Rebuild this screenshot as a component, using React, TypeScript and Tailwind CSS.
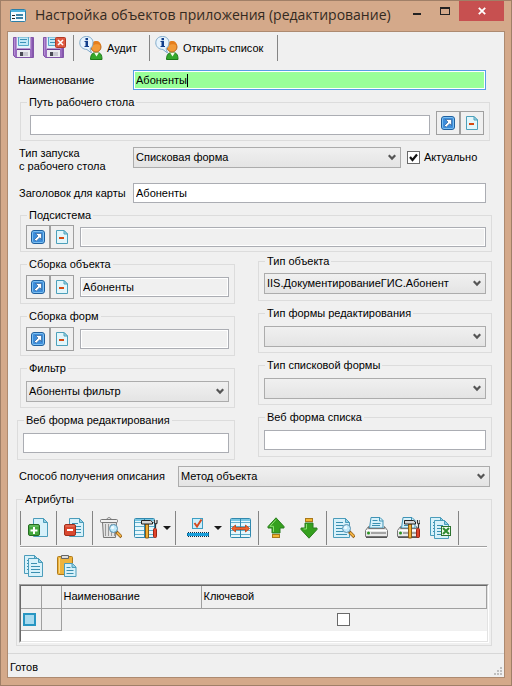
import React, { useId } from "react";

type IconProps = { className?: string };

const Svg = ({ w, h, children }: { w: number; h: number; children: React.ReactNode }) => (
  <svg width={w} height={h} viewBox={`0 0 ${w} ${h}`} fill="none" aria-hidden="true" className="block shrink-0">
    {children}
  </svg>
);

/* ---------- icons ---------- */

const WindowIcon = () => (
  <Svg w={16} h={13}>
    <rect x=".5" y=".5" width="15" height="12" rx="1" fill="#f4fbff" stroke="#2b7fa8" />
    <rect x="1" y="1" width="14" height="2" fill="#4db3de" />
    <rect x="2" y="6" width="3" height="1" fill="#222" />
    <rect x="2" y="9" width="3" height="1" fill="#222" />
    <rect x="6" y="5" width="7" height="2" fill="#3d84a8" />
    <rect x="6" y="8" width="7" height="2" fill="#3d84a8" />
  </Svg>
);

const Floppy = () => (
  <>
    <path d="M.5 .5h20v20h-18l-2-2z" fill="#9a6cc0" stroke="#8256a8" />
    <path d="M1.500 1v17" stroke="#b48cd4" />
    <path d="M19.500 1v19" stroke="#8658ad" />
    <rect x="3.500" y="0" width="14" height="11.500" fill="#e3f5fb" stroke="#b99ad2" />
    <path d="M5.500 0h10v8.500h-10z" fill="#c3e9f6" stroke="#58a9c9" />
    <path d="M7 2.500h7M7 5.500h6" stroke="#3c93b8" />
    <rect x="4" y="13" width="13" height="7" fill="#ececf0" />
    <path d="M4 12.500h13" stroke="#6b3f92" />
    <rect x="7" y="15" width="3" height="4" fill="#4a4a55" />
    <rect x="10" y="15" width="5" height="4" fill="#c9c9d1" />
  </>
);

const SaveIcon = () => (
  <Svg w={22} h={22}>
    <Floppy />
  </Svg>
);

const SaveCloseIcon = () => (
  <Svg w={24} h={22}>
    <Floppy />
    <rect x="12.500" y=".5" width="10" height="10" rx="1" fill="#df5a42" stroke="#b33a24" />
    <path d="M15 3l5 5M20 3l-5 5" stroke="#fff" strokeWidth="1.600" />
  </Svg>
);

const InfoUserIcon = () => (
  <Svg w={24} h={25}>
    <path d="M11.500 23.500c0-5 2-7 6-7s5.500 2 5.500 7z" fill="#35a82c" stroke="#1d7a1a" />
    <path d="M15 16.500l2.500 4 2.500-4z" fill="#f4fbe8" />
    <circle cx="17" cy="11" r="5" fill="#f29a38" stroke="#b8651a" />
    <path d="M12.500 10c.5-4 2.500-5 4.800-5 3 0 4.700 2 4.700 5-2-2.500-6-2.500-9.500 0z" fill="#e57e1c" />
    <path
      d="M7.500 .5c4 0 6.500 2.700 6.500 6.200 0 3-1.600 5.200-3 5.900l1.500 4.400-4.600-3.500C3.500 13.300.8 10.500.8 6.800.8 3 3.500.5 7.500.5z"
      fill="#e6f3fd"
      stroke="#7fa9c9"
    />
    <rect x="6.500" y="2" width="2.500" height="2.200" fill="#123f8c" />
    <rect x="5.500" y="5" width="3.500" height="1" fill="#123f8c" />
    <rect x="6.500" y="5" width="2.500" height="5.500" fill="#123f8c" />
    <rect x="5.500" y="10" width="4.500" height="1" fill="#123f8c" />
  </Svg>
);

const OpenIcon = () => (
  <Svg w={14} h={14}>
    <rect x=".5" y=".5" width="13" height="13" rx="2.500" fill="#7cc0f2" stroke="#1f5f9e" />
    <rect x="2" y="2" width="10" height="10" rx="1" fill="#3d8ddb" />
    <path
      d="M4.500 3.500h6v6l-1.800-1.800-3.500 3.500-1.700-1.700 3.500-3.500z"
      fill="#fff"
      stroke="#1c4f86"
      strokeWidth=".6"
    />
  </Svg>
);

const ClearIcon = () => (
  <Svg w={12} h={14}>
    <path d="M.5 .5h7.500l3.500 3.500v9.500H.5z" fill="#e2f6fb" stroke="#4da0ba" />
    <path d="M8 .5v3.500h3.500z" fill="#a8dcea" stroke="#4da0ba" />
    <rect x="3" y="7" width="5" height="2" fill="#d9480f" />
  </Svg>
);

const Page = ({ lines = true }: { lines?: boolean }) => (
  <>
    <path d="M.5 .5h10l4 4v14H.5z" fill="#d7f1fa" stroke="#4b9cba" />
    <path d="M10.500 .5v4h4z" fill="#8fd0e6" stroke="#4b9cba" />
    {lines && <path d="M3 5.500h6M3 8.500h9M3 11.500h9M3 14.500h9" stroke="#3b8fb0" />}
  </>
);

const AddIcon = () => (
  <Svg w={20} h={20}>
    <g transform="translate(5 0)"><Page lines={false} /></g>
    <rect x=".5" y="6.500" width="11" height="11" rx="1.500" fill="#45a83d" stroke="#246b21" />
    <path d="M1.500 8h9" stroke="#7fcb78" />
    <path d="M6 9v7M2.500 12.500h7" stroke="#fff" strokeWidth="2" />
  </Svg>
);

const RemoveIcon = () => (
  <Svg w={20} h={20}>
    <g transform="translate(5 0)"><Page /></g>
    <rect x=".5" y="6.500" width="11" height="11" rx="1.500" fill="#d9482f" stroke="#a02d1a" />
    <path d="M1.500 8h9" stroke="#ee8672" />
    <path d="M3 12h6" stroke="#fff" strokeWidth="2" />
  </Svg>
);

const Magnifier = () => (
  <>
    <path d="M7 7.500l5.500 5.500" stroke="#8a5a1c" strokeWidth="3.200" />
    <path d="M8 8.500l4 4" stroke="#f4b443" strokeWidth="1.800" />
    <circle cx="4.500" cy="4.500" r="4" fill="#bfe9fa" stroke="#5a90ae" />
    <circle cx="3.600" cy="3.600" r="1.600" fill="#f0fbff" />
  </>
);

const TrashIcon = () => (
  <Svg w={22} h={22}>
    <path d="M2.500 5.500h14l-1 15h-12z" fill="#e2e2e2" stroke="#777" />
    <path d="M5.500 7v12M8.500 7v12M11.500 7v12M14.500 7v12" stroke="#999" />
    <rect x=".5" y="2.500" width="17" height="3" rx="1" fill="#f0f0f0" stroke="#777" />
    <path d="M7 2.500c0-2.500 4-2.500 4 0" stroke="#777" />
    <g transform="translate(9 7)"><Magnifier /></g>
  </Svg>
);

const Sheet = () => (
  <>
    <rect x=".5" y=".5" width="20" height="19" rx="1" fill="#e6f7fc" stroke="#3189ae" />
    <path d="M1 2h19" stroke="#79c7e2" strokeWidth="2" />
    <path d="M1 4.500h19M1 8.500h19M1 12.500h19M1 16.500h19" stroke="#61b0cd" />
    <path d="M10.500 1v18" stroke="#3189ae" />
  </>
);

const Tools = () => (
  <>
    <path d="M4.500 5h3v14h-3z" fill="#f0b033" stroke="#8c5a10" />
    <path d="M.5 1.500h9l2 1.500v2H.5z" fill="#d6d6d6" stroke="#222" />
    <path d="M13.500 1v3l1 1v4M16 1v3l-1 1" stroke="#333" strokeWidth="1.200" />
    <rect x="12.500" y="9.500" width="3" height="9" rx="1" fill="#e0452c" stroke="#9c2414" />
  </>
);

const SheetToolsIcon = () => (
  <Svg w={24} h={21}>
    <Sheet />
    <g transform="translate(7 1)"><Tools /></g>
  </Svg>
);

const CheckLineIcon = () => (
  <Svg w={22} h={20}>
    <rect x="5.500" y=".5" width="10" height="10" fill="#cdeefa" stroke="#3d9fc4" />
    <path d="M7.500 5l2.500 3.500L14.500 1.500" stroke="#d44a20" strokeWidth="2" />
    <rect x="0" y="14" width="22" height="5" fill="#0b6f9e" />
    <path d="M0 14.500h22M0 18.500h22" stroke="#f0f0f0" strokeDasharray="1 1" />
    <path d="M0 14.500h22M0 18.500h22" stroke="#0a2d45" strokeDasharray="1 1" strokeDashoffset="1" />
    <rect x="1" y="15" width="20" height="3" fill="#1a9fdc" />
  </Svg>
);

const SheetWidthIcon = () => (
  <Svg w={21} h={20}>
    <Sheet />
    <path
      d="M1.500 10.500l4-3.500v2.500h10V7l4 3.500-4 3.500v-2.500h-10V14z"
      fill="#f0622c"
      stroke="#b83d12"
      strokeWidth=".8"
    />
  </Svg>
);

const UpIcon = () => (
  <Svg w={18} h={22}>
    <path d="M9 .8l8 8.700v1.500h-4v5H5v-5H1V9.500z" fill="#35a01e" stroke="#2c7d20" />
    <path d="M9 2.500l-6 6.800h3.500v5.500" stroke="#8be070" />
    <rect x="5.500" y="17.500" width="7" height="3" fill="#f2b632" stroke="#a8781a" />
  </Svg>
);

const DownIcon = () => (
  <Svg w={18} h={22}>
    <rect x="5.500" y="1.500" width="7" height="3" fill="#f2b632" stroke="#a8781a" />
    <path d="M9 21.200l8-8.700V11h-4V6H5v5H1v1.500z" fill="#35a01e" stroke="#2c7d20" />
    <path d="M6.500 7v5H3.500" stroke="#8be070" />
  </Svg>
);

const PreviewIcon = () => (
  <Svg w={22} h={22}>
    <g transform="translate(0 1)">
      <path d="M.5 .5h12l4 4v15H.5z" fill="#d7f1fa" stroke="#4b9cba" />
      <path d="M12.500 .5v4h4z" fill="#8fd0e6" stroke="#4b9cba" />
      <path d="M3 4.500h7M3 7.500h7M3 10.500h6M3 13.500h7M3 16.500h11" stroke="#3b8fb0" />
    </g>
    <g transform="translate(9 7)"><Magnifier /></g>
  </Svg>
);

const Printer = () => (
  <>
    <path d="M4.500 11l1.500-10.500h9l3 3V11z" fill="#d7f1fa" stroke="#3f93b5" />
    <path d="M14.500 .5v3.500h3.500" stroke="#3f93b5" />
    <path d="M7.500 3.500h5M7.500 6.500h8M7 8.500h8" stroke="#3b8fb0" />
    <path d="M3.500 9.500l-3 4v6h22v-6l-3-4v2h-16z" fill="#e9e9e9" stroke="#777" />
    <path d="M1 13.500h21" stroke="#fff" />
    <path d="M1 20.500h21" stroke="#555" />
    <rect x="6" y="15" width="15" height="2" fill="#a5a5a5" />
    <circle cx="3.500" cy="16" r="1.500" fill="#2a9322" />
  </>
);

const PrintIcon = () => (
  <Svg w={23} h={22}>
    <Printer />
  </Svg>
);

const PrintSetupIcon = () => (
  <Svg w={23} h={22}>
    <Printer />
    <g transform="translate(7 2)"><Tools /></g>
  </Svg>
);

const ExcelIcon = () => (
  <Svg w={22} h={22}>
    <Page />
    <g transform="translate(4 3)"><Page /></g>
    <rect x="11.500" y="9.500" width="9" height="9" fill="#f2faf0" stroke="#2d7330" />
    <path d="M13 11l6 6M19 11l-6 6" stroke="#2d8a30" strokeWidth="2" />
  </Svg>
);

const CopyIcon = () => (
  <Svg w={20} h={22}>
    <Page />
    <g transform="translate(4 3)"><Page /></g>
  </Svg>
);

const PasteIcon = () => (
  <Svg w={20} h={22}>
    <rect x=".5" y="1.500" width="15" height="18" rx="1" fill="#eeb33c" stroke="#ad7a1c" />
    <path d="M2.500 3v15" stroke="#f9d98c" />
    <path d="M4.500 3.500V.5h7v3z" fill="#dedede" stroke="#666" />
    <path d="M7.500 8.500h8l3.500 3.500v9.500H7.500z" fill="#d7f1fa" stroke="#4b9cba" />
    <path d="M15 8.500v4h4" fill="#8fd0e6" stroke="#4b9cba" />
    <path d="M9.500 12.500h4M9.500 15.500h7M9.500 18.500h7" stroke="#3b8fb0" />
  </Svg>
);

const CaretIcon = () => (
  <Svg w={8} h={4}>
    <path d="M0 0h8L4 4z" fill="#1a1a1a" />
  </Svg>
);

const Chevron = ({ className = "" }: IconProps) => (
  <svg width="8" height="7" viewBox="0 0 8 7" fill="none" aria-hidden="true" className={className}>
    <path d="M.7 1.200L4 4.600l3.300-3.400" stroke="#555" strokeWidth="2.200" />
  </svg>
);

/* ---------- controls ---------- */

type GroupProps = { title: string; className?: string; bodyClass?: string; children: React.ReactNode };

const Group = ({ title, className = "", bodyClass = "", children }: GroupProps) => (
  <fieldset className={`min-w-0 border border-[#dcdcdc] ${className}`}>
    <legend className="ml-1.5 px-0.5 leading-[13px]">{title}</legend>
    <div className={bodyClass}>{children}</div>
  </fieldset>
);

type FieldProps = { label?: string; id?: string; value?: string };

const TextBox = ({ label, id, value = "", readOnly = false }: FieldProps & { readOnly?: boolean }) => (
  <input
    id={id}
    type="text"
    aria-label={label}
    defaultValue={value}
    readOnly={readOnly}
    className={`h-5 w-full min-w-0 flex-1 border border-[#abadb3] px-0.5 outline-none ${
      readOnly ? "bg-[#f0f0f0] shadow-[inset_0_0_0_1px_#ffffff]" : "bg-white"
    }`}
  />
);

const Combo = ({ label, id, value = "" }: FieldProps) => (
  <div className="relative min-w-0 flex-1">
    <select
      id={id}
      aria-label={label}
      defaultValue={value}
      className="block h-[21px] w-full appearance-none border border-[#acacac] bg-linear-to-b from-[#f0f0f0] to-[#e4e4e4] pr-5 pl-0.5 outline-none"
    >
      <option value={value}>{value}</option>
    </select>
    <Chevron className="pointer-events-none absolute top-[7px] right-[5px]" />
  </div>
);

const LookupButtons = () => (
  <div className="flex shrink-0">
    <button type="button" aria-label="Открыть" className="flex size-6 items-center justify-center border border-[#a0a0a0]">
      <OpenIcon />
    </button>
    <button type="button" aria-label="Очистить" className="flex size-6 items-center justify-center border border-[#a0a0a0]">
      <ClearIcon />
    </button>
  </div>
);

const LookupGroup = ({ title, value, className, bodyClass = "" }: Omit<GroupProps, "children"> & { value?: string }) => (
  <Group title={title} className={className} bodyClass={`flex items-center gap-1.5 ${bodyClass}`}>
    <LookupButtons />
    <TextBox label={title} value={value} readOnly />
  </Group>
);

const ToolButton = ({ label, className, children }: { label: string; className: string; children: React.ReactNode }) => (
  <button type="button" aria-label={label} className={`flex h-[34px] shrink-0 items-center justify-center ${className}`}>
    {children}
  </button>
);

const ToolSection = ({ className = "", children }: { className?: string; children?: React.ReactNode }) => (
  <div className={`flex h-[34px] border-l border-[#858585] ${className}`}>{children}</div>
);

/* ---------- window ---------- */

const TitleBar = () => (
  <header className="flex h-[30px] items-start justify-between pl-[9px]">
    <div className="flex items-center gap-[9px] pt-0.5">
      <WindowIcon />
      <h1 className="font-['Open_Sans','Noto_Sans',sans-serif] text-[14px] leading-6 whitespace-nowrap text-[#33291f]">
        Настройка объектов приложения (редактирование)
      </h1>
    </div>
    <div className="flex pr-[7px]">
      <button type="button" aria-label="Свернуть" className="flex h-5 w-7 items-center justify-center pt-1.5">
        <span className="h-0.5 w-2 bg-[#222]" />
      </button>
      <button type="button" aria-label="Развернуть" className="flex h-5 w-7 items-center justify-center">
        <span className="h-2 w-2.5 border border-t-2 border-[#222]" />
      </button>
      <button type="button" aria-label="Закрыть" className="flex h-5 w-[45px] items-center justify-center bg-[#c75050]">
        <Svg w={8} h={8}>
          <path d="M.8 .8l6.400 6.400M7.200 .8L.8 7.200" stroke="#fff" strokeWidth="1.800" />
        </Svg>
      </button>
    </div>
  </header>
);

const MainToolbar = () => (
  <div role="toolbar" className="flex h-8 items-center pl-[5px]">
    <button type="button" aria-label="Сохранить" className="w-[30px]"><SaveIcon /></button>
    <button type="button" aria-label="Сохранить и закрыть" className="w-[30px]"><SaveCloseIcon /></button>
    <button type="button" className="flex h-[26px] w-[76px] items-center gap-1 border-l border-[#858585] pl-[5px]">
      <InfoUserIcon />
      Аудит
    </button>
    <button
      type="button"
      className="flex h-[26px] w-[129px] items-center gap-1 border-x border-[#858585] pl-[5px] whitespace-nowrap"
    >
      <InfoUserIcon />
      Открыть список
    </button>
  </div>
);

const AttributesToolbar = () => (
  <>
    <div role="toolbar" className="mr-1 ml-[3px] flex border-b border-[#a0a0a0] pb-px shadow-[0_1px_0_#ffffff]">
      <ToolSection className="pr-0.5"><ToolButton label="Добавить" className="w-[33px]"><AddIcon /></ToolButton></ToolSection>
      <ToolSection className="pr-0.5"><ToolButton label="Удалить" className="w-[33px]"><RemoveIcon /></ToolButton></ToolSection>
      <ToolSection className="pr-1">
        <ToolButton label="Найти" className="w-9"><TrashIcon /></ToolButton>
        <ToolButton label="Настройка таблицы" className="w-[34px]"><SheetToolsIcon /></ToolButton>
        <ToolButton label="Ещё" className="w-2"><CaretIcon /></ToolButton>
      </ToolSection>
      <ToolSection className="pl-1.5">
        <ToolButton label="Отметить" className="w-8"><CheckLineIcon /></ToolButton>
        <ToolButton label="Ещё" className="w-2"><CaretIcon /></ToolButton>
        <ToolButton label="Ширина столбцов" className="w-9"><SheetWidthIcon /></ToolButton>
      </ToolSection>
      <ToolSection className="px-px">
        <ToolButton label="Вверх" className="w-8"><UpIcon /></ToolButton>
        <ToolButton label="Вниз" className="w-[33px]"><DownIcon /></ToolButton>
      </ToolSection>
      <ToolSection className="px-px">
        <ToolButton label="Просмотр" className="w-8"><PreviewIcon /></ToolButton>
        <ToolButton label="Печать" className="w-8"><PrintIcon /></ToolButton>
        <ToolButton label="Настройка печати" className="w-8"><PrintSetupIcon /></ToolButton>
        <ToolButton label="Экспорт в Excel" className="w-[33px]"><ExcelIcon /></ToolButton>
      </ToolSection>
      <ToolSection />
    </div>
    <div role="toolbar" className="flex h-[37px] items-center gap-[13px] pl-[7px]">
      <button type="button" aria-label="Копировать"><CopyIcon /></button>
      <button type="button" aria-label="Вставить"><PasteIcon /></button>
    </div>
  </>
);

const AttributesTable = () => (
  <div className="mr-0.5 ml-0.5 border border-[#a0a0a0] border-r-white border-b-white">
    <div className="border border-[#696969] border-r-[#e3e3e3] border-b-[#e3e3e3] bg-white pb-2.5">
      <table className="w-full table-fixed border-collapse bg-[#f0f0f0] text-left">
        <colgroup>
          <col className="w-5" />
          <col className="w-5" />
          <col className="w-[140px]" />
          <col />
        </colgroup>
        <thead>
          <tr className="h-[22px] border-b border-[#a0a0a0]">
            <td className="border-r border-[#a0a0a0]" />
            <td className="border-r border-[#a0a0a0]" />
            <th className="border-r border-[#a0a0a0] px-0.5 font-normal">Наименование</th>
            <th className="border-r border-[#a0a0a0] px-0.5 font-normal">Ключевой</th>
          </tr>
        </thead>
        <tbody>
          <tr className="h-[22px]">
            <td className="border-r border-b border-[#a0a0a0]">
              <Svg w={17} h={13}>
                <rect x="3" y="1" width="11" height="11" fill="#a8daee" stroke="#2896c2" strokeWidth="2" />
              </Svg>
            </td>
            <td className="border-r border-b border-[#a0a0a0]" />
            <td className="bg-[#f2f2f2]" />
            <td className="bg-[#f2f2f2]">
              <input
                type="checkbox"
                aria-label="Ключевой"
                className="mx-auto block size-[13px] appearance-none border border-[#6a6a6a] bg-white"
              />
            </td>
          </tr>
        </tbody>
      </table>
    </div>
  </div>
);

export default function App() {
  const uid = useId();
  return (
    <div className="flex min-h-screen flex-col border border-[#a07f67] bg-[#d4a98a] font-['Liberation_Sans',Arial,sans-serif] text-[11px] leading-[13px] text-black">
      <TitleBar />
      <main className="mx-1.5 mb-[7px] flex flex-1 flex-col border border-[#ad8a70] bg-[#f0f0f0]">
        <MainToolbar />
        <form className="flex flex-col pt-1.5 pr-3 pl-2">
          <div className="flex items-center pr-1.5 pl-0.5">
            <label htmlFor={`${uid}name`} className="w-[115px] shrink-0">Наименование</label>
            <div className="flex h-5 flex-1 items-center border border-[#569de5] bg-white p-px">
              <div className="flex h-full flex-1 items-center bg-[#99ff99] pl-px">
                <input
                  id={`${uid}name`}
                  type="text"
                  defaultValue="Абоненты"
                  className="field-sizing-content bg-transparent outline-none"
                />
                <span className="h-[13px] w-px bg-black" />
              </div>
            </div>
          </div>

          <Group
            title="Путь рабочего стола"
            className="mt-1.5 mr-0.5 ml-1"
            bodyClass="flex items-end gap-1.5 pt-0.5 pr-[5px] pb-[5px] pl-[9px]"
          >
            <TextBox label="Путь рабочего стола" />
            <LookupButtons />
          </Group>

          <div className="mt-1.5 flex items-start pl-[3px]">
            <label htmlFor={`${uid}launch`} className="w-[114px] shrink-0">
              Тип запуска
              <br />с рабочего стола
            </label>
            <Combo id={`${uid}launch`} value="Списковая форма" />
            <label className="ml-1.5 flex h-5 w-[85px] items-center gap-1">
              <span className="relative flex">
                <input
                  type="checkbox"
                  defaultChecked
                  className="peer size-[13px] appearance-none border border-[#6a6a6a] bg-white"
                />
                <svg
                  viewBox="0 0 13 13"
                  fill="none"
                  aria-hidden="true"
                  className="pointer-events-none absolute inset-0 hidden size-[13px] peer-checked:block"
                >
                  <path d="M3 6l2.500 3L10 3.500" stroke="#111" strokeWidth="2.200" />
                </svg>
              </span>
              Актуально
            </label>
          </div>

          <div className="mt-2.5 flex items-center pr-1.5 pl-[3px]">
            <label htmlFor={`${uid}caption`} className="w-[114px] shrink-0 whitespace-nowrap">Заголовок для карты</label>
            <TextBox id={`${uid}caption`} value="Абоненты" />
          </div>

          <LookupGroup title="Подсистема" className="mt-1.5 ml-1" bodyClass="pt-[3px] pr-[5px] pb-0.5 pl-[5px]" />

          <div className="mt-[3px] grid grid-cols-[219fr_234fr] items-start gap-x-[23px]">
            <div className="flex flex-col gap-1.5 pt-[3px]">
              <LookupGroup title="Сборка объекта" value="Абоненты" className="ml-1" bodyClass="px-[5px] py-1" />
              <LookupGroup title="Сборка форм" className="ml-1" bodyClass="px-[5px] py-1" />
              <Group title="Фильтр" className="ml-1" bodyClass="px-[5px] pt-1.5 pb-[5px]">
                <Combo label="Фильтр" value="Абоненты фильтр" />
              </Group>
              <Group title="Веб форма редактирования" className="ml-px" bodyClass="flex px-[5px] py-1.5">
                <TextBox label="Веб форма редактирования" />
              </Group>
            </div>
            <div className="flex flex-col gap-1.5">
              <Group title="Тип объекта" bodyClass="px-[5px] pt-[5px] pb-1.5">
                <Combo label="Тип объекта" value="IIS.ДокументированиеГИС.Абонент" />
              </Group>
              <Group title="Тип формы редактирования" bodyClass="px-[5px] pt-1.5 pb-[5px]">
                <Combo label="Тип формы редактирования" />
              </Group>
              <Group title="Тип списковой формы" bodyClass="px-[5px] pt-1.5 pb-[5px]">
                <Combo label="Тип списковой формы" />
              </Group>
              <Group title="Веб форма списка" bodyClass="flex px-[5px] py-1.5">
                <TextBox label="Веб форма списка" />
              </Group>
            </div>
          </div>

          <div className="mt-1.5 flex items-center pr-0.5 pl-[3px]">
            <label htmlFor={`${uid}method`} className="w-[159px] shrink-0">Способ получения описания</label>
            <Combo id={`${uid}method`} value="Метод объекта" />
          </div>

          <Group title="Атрибуты" className="mt-1.5" bodyClass="pt-[5px] pb-0.5">
            <AttributesToolbar />
            <AttributesTable />
          </Group>
        </form>

        <footer className="mt-auto flex h-6 items-center justify-between border-t border-[#d7d7d7] px-0.5">
          <span className="pt-1">Готов</span>
          <span className="self-end pb-0.5">
            <Svg w={8} h={8}>
              <path d="M6 0h2v2H6zM3 3h2v2H3zM6 3h2v2H6zM0 6h2v2H0zM3 6h2v2H3zM6 6h2v2H6z" fill="#bfbfbf" />
            </Svg>
          </span>
        </footer>
      </main>
    </div>
  );
}
